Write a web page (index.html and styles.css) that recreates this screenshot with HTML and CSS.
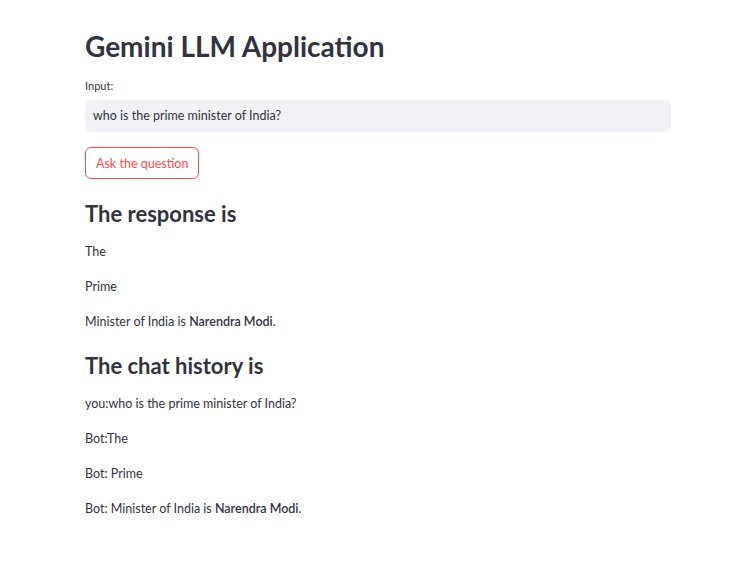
FILE: index.html
```html
<!DOCTYPE html>
<html>
<head>
<meta charset="utf-8">
<link rel="stylesheet" href="styles.css">
</head>
<body>
<main class="main">
  <h1 class="title">Gemini LLM Application</h1>
  <label class="label">Input:</label>
  <div class="input">who is the prime minister of India?</div>
  <button class="btn">Ask the question</button>
  <h2 class="heading">The response is</h2>
  <p class="para">The</p>
  <p class="para">Prime</p>
  <p class="para">Minister of India is <strong>Narendra Modi</strong>.</p>
  <h2 class="heading">The chat history is</h2>
  <p class="para">you:who is the prime minister of India?</p>
  <p class="para">Bot:The</p>
  <p class="para">Bot: Prime</p>
  <p class="para">Bot: Minister of India is <strong>Narendra Modi</strong>.</p>
</main>
</body>
</html>
```
FILE: styles.css
```css
html, body {
  margin: 0;
  padding: 0;
  background: #ffffff;
}
body {
  font-family: "Lato", "Liberation Sans", sans-serif;
  color: #31333f;
}
.main {
  width: 586px;
  margin-left: 85px;
  padding-top: 26px;
  display: flex;
  flex-direction: column;
  align-items: flex-start;
}
.title {
  margin: 0;
  font-size: 28px;
  line-height: 40px;
  font-weight: 700;
}
.label {
  margin-top: 12px;
  font-size: 11px;
  line-height: 16px;
}
.input {
  margin-top: 6px;
  box-sizing: border-box;
  width: 100%;
  height: 32px;
  background: #f0f2f6;
  border-radius: 6px;
  padding: 0 8px;
  font-size: 12.5px;
  line-height: 32px;
}
.btn {
  margin-top: 15px;
  height: 32px;
  box-sizing: border-box;
  padding: 0 10px;
  background: #fff;
  border: 1px solid #ff4b4b;
  border-radius: 6px;
  color: #ff4b4b;
  font-family: inherit;
  font-size: 12.5px;
}
.heading {
  margin: 20px 0 0;
  font-size: 22px;
  line-height: 30px;
  font-weight: 700;
}
.para + .heading {
  margin-top: 19px;
}
.para {
  margin: 13px 0 15px;
  font-size: 12.5px;
  line-height: 20px;
}
.para + .para {
  margin-top: 0;
}
.para:has(+ .heading), .para:last-child {
  margin-bottom: 0;
}
strong {
  font-weight: 600;
}
```
